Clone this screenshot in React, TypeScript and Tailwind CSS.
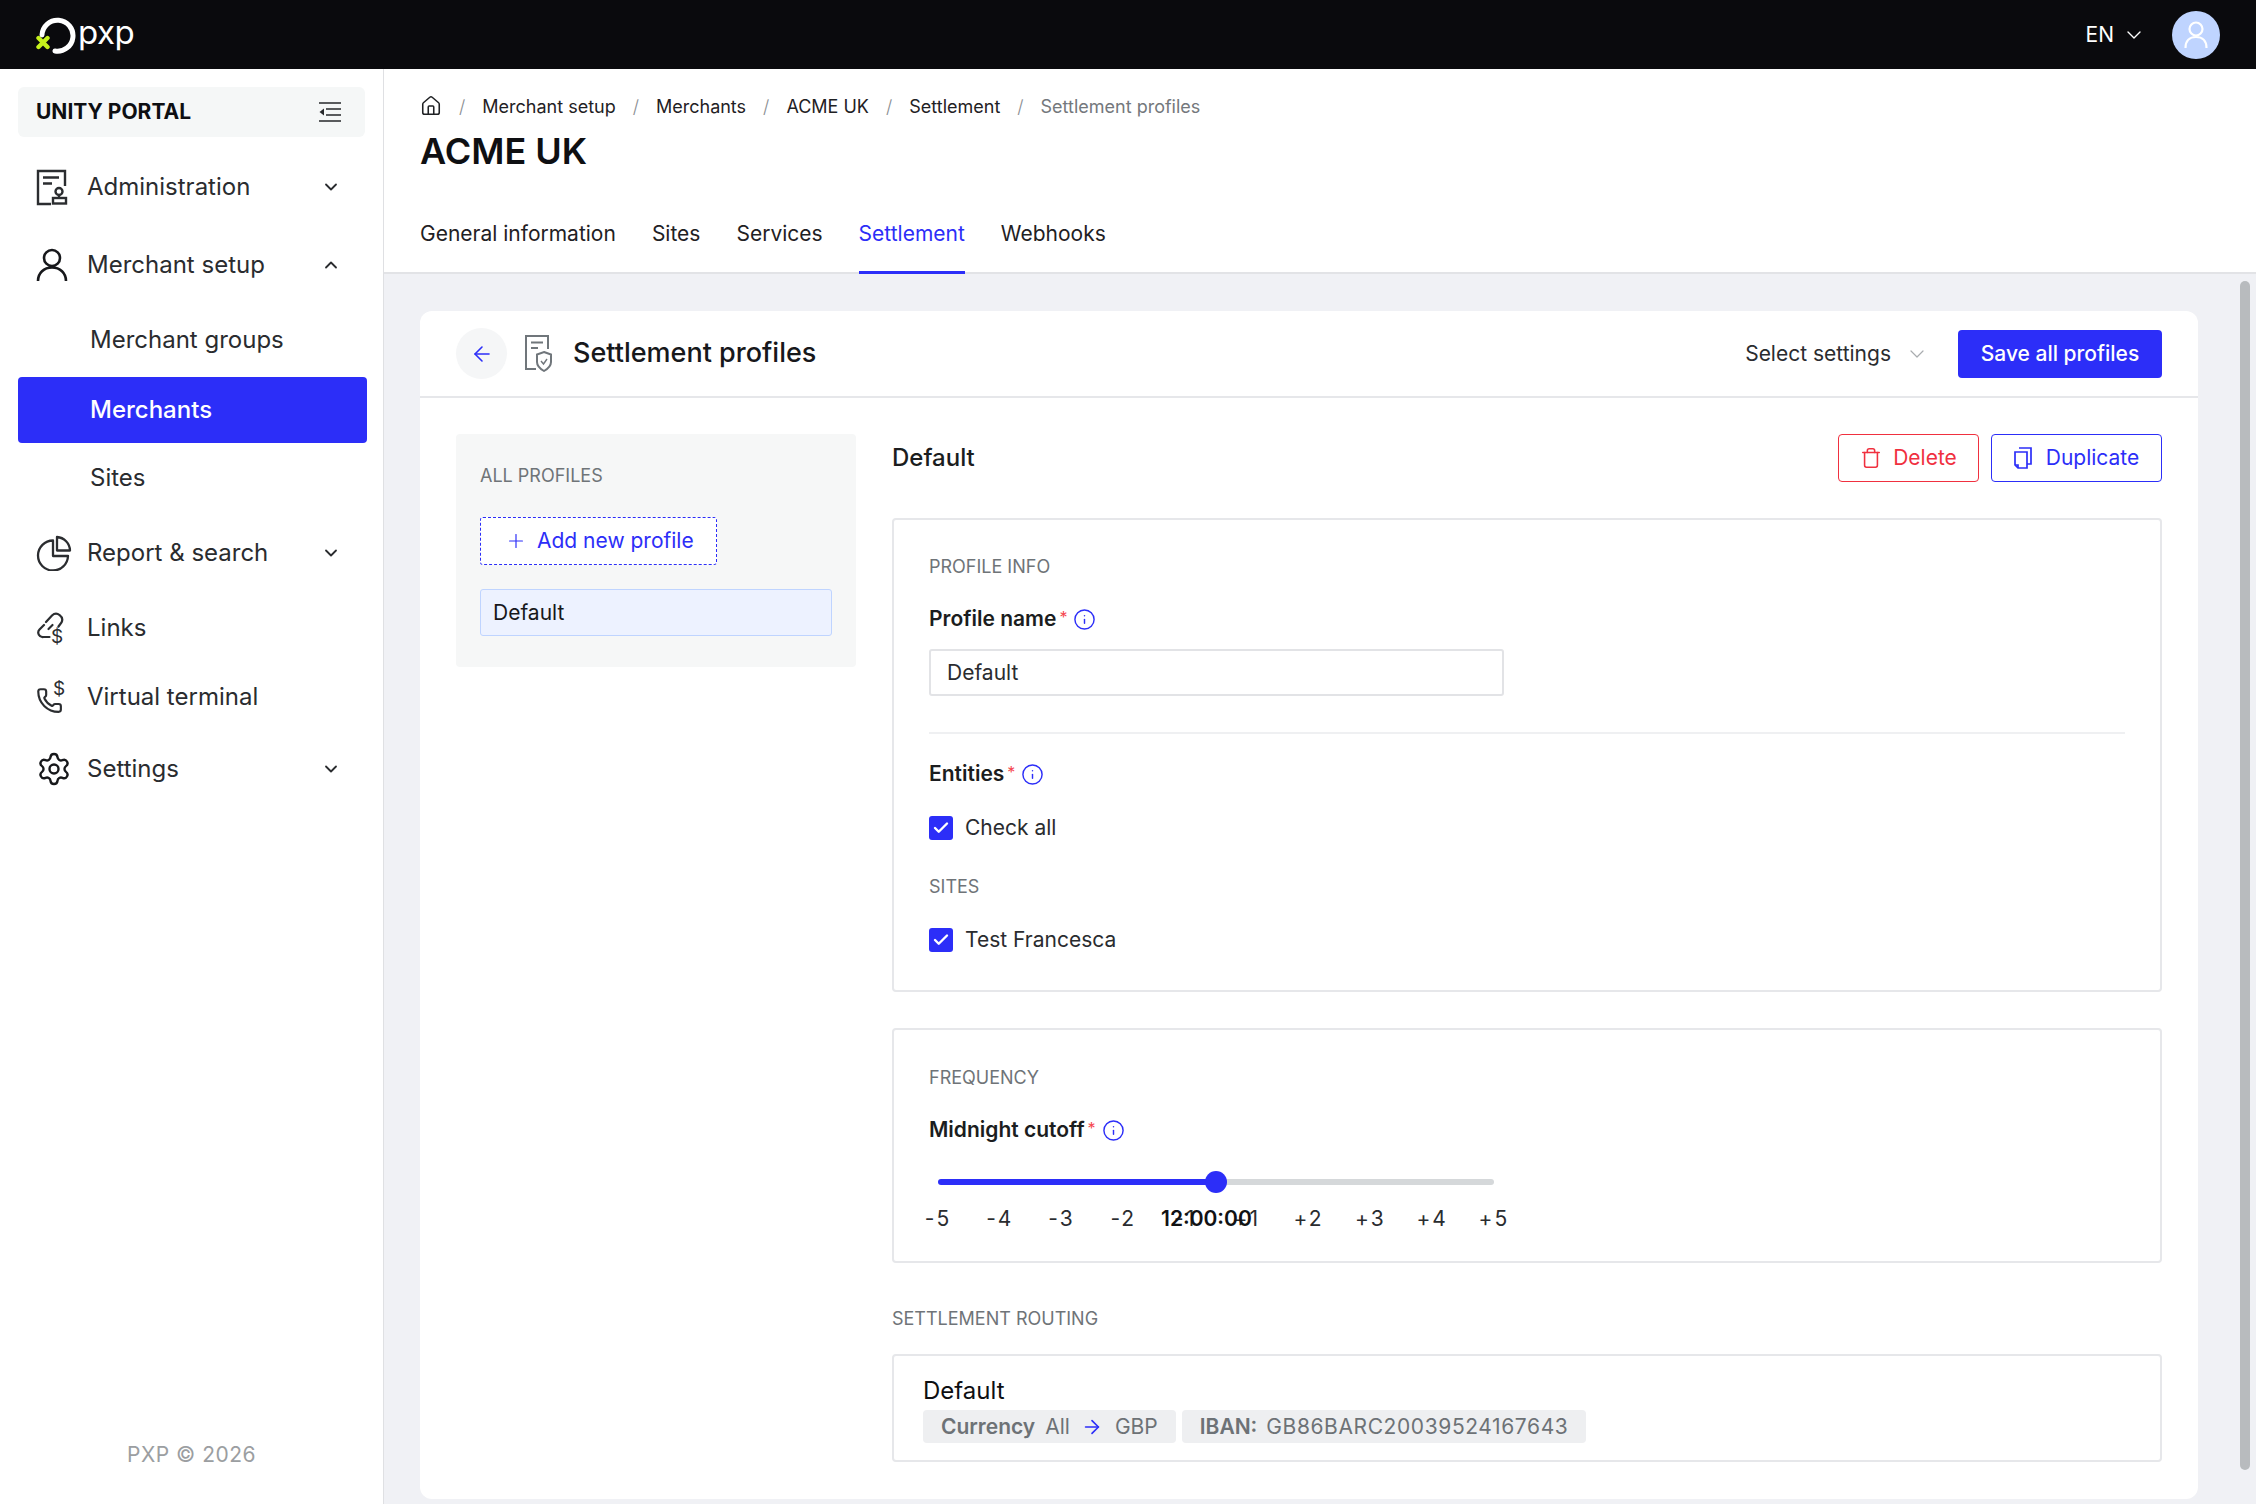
import { ArrowLeft, ArrowRight, Check, ChevronDown, ChevronUp, Home, Info, Plus, Settings, Trash } from "lucide-react";
import type { ReactNode } from "react";

function AdminIcon() {
  return (
    <svg width="33" height="37" viewBox="0 0 33 37" fill="none" stroke="#2b2d30" strokeWidth="2.4">
      <path d="M15 35H2V2h27v15" />
      <path d="M7 8.5h16M7 14.5h9" />
      <circle cx="23" cy="22.5" r="3.5" />
      <path d="M23 26v3" />
      <rect x="17" y="29" width="13" height="5.5" />
    </svg>
  );
}

function UserIcon() {
  return (
    <svg width="32" height="34" viewBox="0 0 32 34" fill="none" stroke="#17181b" strokeWidth="2.6">
      <circle cx="16" cy="10" r="8" />
      <path d="M2 33c0-8 6-13.5 14-13.5S30 25 30 33" />
    </svg>
  );
}

function PieIcon() {
  return (
    <svg width="36" height="36" viewBox="0 0 36 36" fill="none" stroke="#2b2d30" strokeWidth="2.3" strokeLinejoin="round">
      <path d="M17 5.5a15 15 0 1 0 15 15.5H17z" />
      <path d="M21 2a14 14 0 0 1 13 13.5H21z" />
    </svg>
  );
}

function LinkMoneyIcon() {
  return (
    <svg width="30" height="34" viewBox="0 0 30 34" fill="none" stroke="#2b2d30" strokeWidth="2.2" strokeLinecap="round">
      <path d="M10 11l6-6.500a6 6 0 0 1 9.500 7l-3 4" />
      <path d="M8 14l-4.500 4.500a4.500 4.500 0 0 0 4 7.500h6" />
      <path d="M12.500 18l4-4" />
      <text x="15" y="32" fontFamily="Inter" fontSize="19" fill="#2b2d30" stroke="none">$</text>
    </svg>
  );
}

function PhoneMoneyIcon() {
  return (
    <svg width="30" height="34" viewBox="0 0 30 34" fill="none" stroke="#2b2d30" strokeWidth="2.200" strokeLinecap="round">
      <g transform="translate(0 7) scale(1.130)" strokeWidth="1.900">
        <path d="M13.832 16.568a1 1 0 0 0 1.213-.303l.355-.465A2 2 0 0 1 17 15h3a2 2 0 0 1 2 2v3a2 2 0 0 1-2 2A18 18 0 0 1 2 4a2 2 0 0 1 2-2h3a2 2 0 0 1 2 2v3a2 2 0 0 1-.8 1.600l-.468.351a1 1 0 0 0-.292 1.233 14 14 0 0 0 6.392 6.384" />
      </g>
      <text x="17" y="15" fontFamily="Inter" fontSize="19" fill="#2b2d30" stroke="none">$</text>
    </svg>
  );
}

function CollapseIcon() {
  return (
    <svg width="22" height="20" viewBox="0 0 22 20" fill="none" stroke="#26282b" strokeWidth="1.600">
      <path d="M0 1h22M7 7h15M7 13h15M0 19h22" />
      <path d="M5 6.500v7L0.500 10z" fill="#26282b" stroke="none" />
    </svg>
  );
}

function SettlementDocIcon() {
  return (
    <svg width="28" height="37" viewBox="0 0 28 37" fill="none" stroke="#70767b" strokeWidth="2">
      <path d="M11 34H1V1h22v13" />
      <path d="M6 7.500h12M6 13h7" />
      <path d="M19 17l7 2.500v7.500c0 4-3.500 7-7 9-3.500-2-7-5-7-9v-7.500z" />
      <path d="M16 26l2.500 3 3.500-5" strokeWidth="1.400" />
    </svg>
  );
}

function DuplicateIcon() {
  return (
    <svg width="18" height="22" viewBox="0 0 18 22" fill="none" stroke="#2c2ef8" strokeWidth="1.700">
      <path d="M5 1h12v16h-4" />
      <path d="M1 5h12v16H4l-3-3z" />
      <path d="M1 18h3v3" />
    </svg>
  );
}

function Logo() {
  return (
    <div className="flex items-center">
      <svg width="40" height="42" viewBox="0 0 40 42" fill="none" className="ml-[36px]">
        <path d="M16 36a15.500 15.500 0 1 0-13-16" stroke="#fff" strokeWidth="5" strokeLinecap="round" transform="translate(3 1)" />
        <path d="M2 24l9 9M11 24l-9 9" stroke="#c6f21c" strokeWidth="4.400" strokeLinecap="round" transform="translate(0.500 0)" />
      </svg>
      <span className="ml-[2px] text-[33px] leading-none font-normal text-white tracking-[-0.5px] -mt-[4px]">pxp</span>
    </div>
  );
}

function NavRow({ icon, label, h, chevron }: { icon: ReactNode; label: string; h: string; chevron?: "up" | "down" }) {
  return (
    <div className={`flex items-center pl-[36px] pr-[42px] ${h}`}>
      <div className="w-[51px] flex items-center">{icon}</div>
      <span className="flex-1 text-[24px] text-[#2a2c2f]">{label}</span>
      {chevron === "down" && <ChevronDown size={20} strokeWidth={2.2} className="text-[#2a2c2f]" />}
      {chevron === "up" && <ChevronUp size={20} strokeWidth={2.2} className="text-[#2a2c2f]" />}
    </div>
  );
}

function SectionLabel({ children }: { children: ReactNode }) {
  return <div className="h-[24px] flex items-center text-[18px] text-[#6f7478]">{children}</div>;
}

function FieldLabel({ children }: { children: ReactNode }) {
  return (
    <div className="h-[28px] flex items-center text-[21px] font-semibold text-[#1b1d20]">
      {children}
      <span className="ml-[3px] -mt-[4px] text-[16px] font-normal text-[#f5474f]">*</span>
      <Info size={23} strokeWidth={1.500} className="ml-[6px] text-[#2c2ef8]" />
    </div>
  );
}

function CheckRow({ label }: { label: string }) {
  return (
    <div className="h-[25px] flex items-center gap-[12px]">
      <div className="w-[24px] h-[24px] rounded-[3px] bg-[#2c2ef8] flex items-center justify-center">
        <Check size={18} strokeWidth={3.200} className="text-white" />
      </div>
      <span className="text-[21px] text-[#2a2c2f]">{label}</span>
    </div>
  );
}

function Crumb({ children, muted }: { children: ReactNode; muted?: boolean }) {
  return (
    <>
      <span className="text-[#8a8e92] text-[18px] font-light">/</span>
      <span className={muted ? "text-[#74787c]" : "text-[#1f2124]"}>{children}</span>
    </>
  );
}

const marks = ["-5", "-4", "-3", "-2", "-1", "+1", "+2", "+3", "+4", "+5"];

export default function App() {
  return (
    <div className="h-screen w-full flex flex-col overflow-hidden bg-white" style={{ fontFamily: "Inter, sans-serif" }}>
      {/* top bar */}
      <header className="h-[69px] shrink-0 bg-[#0a0a0d] flex items-center justify-between">
        <Logo />
        <div className="flex items-center pr-[36px]">
          <span className="text-[21px] text-white">EN</span>
          <ChevronDown size={24} strokeWidth={1.400} className="ml-[8px] text-white" />
          <div className="ml-[26px] w-[48px] h-[48px] rounded-full bg-[#bfd4ff] flex items-center justify-center">
            <svg width="24" height="28" viewBox="0 0 24 28" fill="none" stroke="#fff" strokeWidth="2.200">
              <circle cx="12" cy="8" r="6.500" />
              <path d="M1.500 27c0-7 4-11 10.500-11s10.500 4 10.500 11" />
            </svg>
          </div>
        </div>
      </header>

      <div className="flex-1 flex min-h-0">
        {/* sidebar */}
        <aside className="w-[384px] shrink-0 border-r border-[#dfe0e3] flex flex-col pt-[18px]">
          <div className="mx-[18px] w-[347px] h-[50px] rounded-[6px] bg-[#f5f7f7] flex items-center justify-between pl-[18px] pr-[24px]">
            <span className="text-[21px] font-bold text-[#0e0f12]">UNITY PORTAL</span>
            <CollapseIcon />
          </div>
          <div className="mt-[11px]">
            <NavRow icon={<AdminIcon />} label="Administration" h="h-[78px]" chevron="down" />
            <NavRow icon={<UserIcon />} label="Merchant setup" h="h-[78px]" chevron="up" />
            <div className="mt-[3px] flex flex-col">
              <div className="h-[66px] flex items-center pl-[90px] text-[24px] text-[#2a2c2f]">Merchant groups</div>
              <div className="mt-[4px] ml-[18px] w-[349px] h-[66px] rounded-[4px] bg-[#2c2ef8] flex items-center pl-[72px] text-[24px] font-medium text-white">Merchants</div>
              <div className="mt-[2px] h-[66px] flex items-center pl-[90px] text-[24px] text-[#2a2c2f]">Sites</div>
            </div>
            <div className="mt-[3px]">
              <NavRow icon={<PieIcon />} label="Report & search" h="h-[78px]" chevron="down" />
              <NavRow icon={<LinkMoneyIcon />} label="Links" h="h-[72px]" />
              <NavRow icon={<PhoneMoneyIcon />} label="Virtual terminal" h="h-[66px]" />
              <NavRow icon={<Settings size={36} strokeWidth={1.600} className="text-[#17181b]" />} label="Settings" h="h-[78px]" chevron="down" />
            </div>
          </div>
          <div className="mt-auto mb-[34px] text-center text-[21px] tracking-[0.5px] text-[#9b9ea1]">PXP © 2026</div>
        </aside>

        <main className="flex-1 min-w-0 flex flex-col relative">
          {/* page header */}
          <div className="h-[205px] shrink-0 border-b-2 border-[#e2e3e6] flex flex-col pl-[36px]">
            <div className="mt-[22px] h-[30px] flex items-center gap-[17px] text-[18px]">
              <Home size={22} strokeWidth={1.700} className="text-[#1f2124]" />
              <Crumb>Merchant setup</Crumb>
              <Crumb>Merchants</Crumb>
              <Crumb>ACME UK</Crumb>
              <Crumb>Settlement</Crumb>
              <Crumb muted>Settlement profiles</Crumb>
            </div>
            <h1 className="mt-[8px] h-[44px] flex items-center text-[36px] font-semibold text-[#0e0f12]">ACME UK</h1>
            <nav className="mt-auto -mb-[2px] h-[77px] flex gap-[36px] text-[21px] text-[#1f2124]">
              <span className="flex items-center border-b-[3px] border-transparent">General information</span>
              <span className="flex items-center border-b-[3px] border-transparent">Sites</span>
              <span className="flex items-center border-b-[3px] border-transparent">Services</span>
              <span className="flex items-center border-b-[3px] border-[#2c2ef8] text-[#2c2ef8]">Settlement</span>
              <span className="flex items-center border-b-[3px] border-transparent">Webhooks</span>
            </nav>
          </div>

          {/* content */}
          <div className="flex-1 min-h-0 bg-[#f0f1f5] pt-[37px] pl-[36px] pr-[58px]">
            <section className="h-[1188px] rounded-[12px] bg-white flex flex-col">
              <div className="h-[87px] shrink-0 border-b-2 border-[#e6e7ea] flex items-center px-[36px]">
                <div className="w-[51px] h-[51px] rounded-full bg-[#f5f6f7] flex items-center justify-center">
                  <ArrowLeft size={24} strokeWidth={1.600} className="text-[#2c2ef8]" />
                </div>
                <div className="ml-[18px]">
                  <SettlementDocIcon />
                </div>
                <h2 className="ml-[20px] text-[27px] font-medium text-[#17181b]">Settlement profiles</h2>
                <div className="ml-auto flex items-center">
                  <span className="text-[21px] text-[#2a2c2f]">Select settings</span>
                  <ChevronDown size={24} strokeWidth={1.200} className="ml-[14px] text-[#a9acaf]" />
                </div>
                <button className="ml-[29px] w-[204px] h-[48px] rounded-[4px] bg-[#2c2ef8] text-[21px] font-medium text-white">Save all profiles</button>
              </div>

              <div className="flex gap-[36px] px-[36px] pt-[36px]">
                {/* profile list */}
                <div className="w-[400px] h-[233px] shrink-0 rounded-[4px] bg-[#f6f7f7] px-[24px] pt-[29px]">
                  <SectionLabel>ALL PROFILES</SectionLabel>
                  <div className="mt-[30px] w-[237px] h-[48px] rounded-[3px] border border-dashed border-[#2c2ef8] bg-white flex items-center pl-[24px] text-[21px] text-[#2c2ef8]">
                    <Plus size={22} strokeWidth={1.300} />
                    <span className="ml-[10px]">Add new profile</span>
                  </div>
                  <div className="mt-[24px] h-[47px] rounded-[3px] border border-[#bfd4ff] bg-[#edf2ff] flex items-center pl-[12px] text-[21px] text-[#17181b]">Default</div>
                </div>

                {/* profile detail */}
                <div className="flex-1 min-w-0">
                  <div className="h-[48px] flex items-center">
                    <span className="text-[24px] font-medium text-[#1b1d20]">Default</span>
                    <button className="ml-auto w-[141px] h-[48px] rounded-[4px] border border-[#f0303f] flex items-center justify-center gap-[11px] text-[21px] text-[#f0303f]">
                      <Trash size={22} strokeWidth={1.700} />
                      Delete
                    </button>
                    <button className="ml-[12px] w-[171px] h-[48px] rounded-[4px] border border-[#2c2ef8] flex items-center justify-center gap-[14px] text-[21px] text-[#2c2ef8]">
                      <DuplicateIcon />
                      Duplicate
                    </button>
                  </div>

                  <div className="mt-[36px] h-[474px] rounded-[4px] border-2 border-[#e6e7ea] pl-[35px] pr-[35px] pt-[34px]">
                    <SectionLabel>PROFILE INFO</SectionLabel>
                    <div className="mt-[27px]">
                      <FieldLabel>Profile name</FieldLabel>
                    </div>
                    <div className="mt-[16px] w-[575px] h-[47px] rounded-[3px] border-2 border-[#e2e3e6] flex items-center pl-[16px] text-[21px] text-[#2a2c2f]">Default</div>
                    <div className="mt-[36px] h-[2px] bg-[#eff0f2]" />
                    <div className="mt-[26px]">
                      <FieldLabel>Entities</FieldLabel>
                    </div>
                    <div className="mt-[27px]">
                      <CheckRow label="Check all" />
                    </div>
                    <div className="mt-[34px]">
                      <SectionLabel>SITES</SectionLabel>
                    </div>
                    <div className="mt-[29px]">
                      <CheckRow label="Test Francesca" />
                    </div>
                  </div>

                  <div className="mt-[36px] h-[235px] rounded-[4px] border-2 border-[#e6e7ea] pl-[35px] pt-[35px]">
                    <SectionLabel>FREQUENCY</SectionLabel>
                    <div className="mt-[27px]">
                      <FieldLabel>Midnight cutoff</FieldLabel>
                    </div>
                    <div className="mt-[27px] ml-[9px] w-[556px]">
                      <div className="relative h-[22px] flex items-center">
                        <div className="w-1/2 h-[6px] rounded-l-full bg-[#2c2ef8]" />
                        <div className="w-1/2 h-[6px] rounded-r-full bg-[#d5d8da]" />
                        <div className="absolute left-[267px] w-[22px] h-[22px] rounded-full bg-[#2c2ef8]" />
                      </div>
                      <div className="relative mt-[10px] h-[28px] flex justify-between text-[21px] text-[#2a2c2f]">
                        {marks.map((m) => (
                          <div key={m} className="w-0 flex justify-center">
                            <span className="tracking-[2px]">{m}</span>
                          </div>
                        ))}
                        <span className="absolute left-[223px] text-[21px] font-semibold text-[#111214]">12:00:00</span>
                      </div>
                    </div>
                  </div>

                  <div className="mt-[43px]">
                    <SectionLabel>SETTLEMENT ROUTING</SectionLabel>
                  </div>
                  <div className="mt-[24px] h-[108px] rounded-[4px] border-2 border-[#e6e7ea] pl-[29px] pt-[18px]">
                    <div className="h-[33px] flex items-center text-[24px] text-[#0e0f12]">Default</div>
                    <div className="mt-[3px] flex gap-[6px] text-[21px] text-[#6d7276]">
                      <div className="h-[33px] rounded-[4px] bg-[#eeeff1] flex items-center px-[18px]">
                        <span className="font-semibold">Currency</span>
                        <span className="ml-[10px]">All</span>
                        <ArrowRight size={22} strokeWidth={1.800} className="ml-[11px] text-[#2c2ef8]" />
                        <span className="ml-[12px]">GBP</span>
                      </div>
                      <div className="h-[33px] rounded-[4px] bg-[#eeeff1] flex items-center px-[18px]">
                        <span className="font-semibold">IBAN:</span>
                        <span className="ml-[9px] tracking-[0.6px]">GB86BARC20039524167643</span>
                      </div>
                    </div>
                  </div>
                </div>
              </div>
            </section>
          </div>

          {/* scrollbar overlay */}
          <div className="absolute right-[6px] top-[212px] w-[10px] h-[1189px] rounded-full bg-[#b8bbbe]" />
        </main>
      </div>
    </div>
  );
}
